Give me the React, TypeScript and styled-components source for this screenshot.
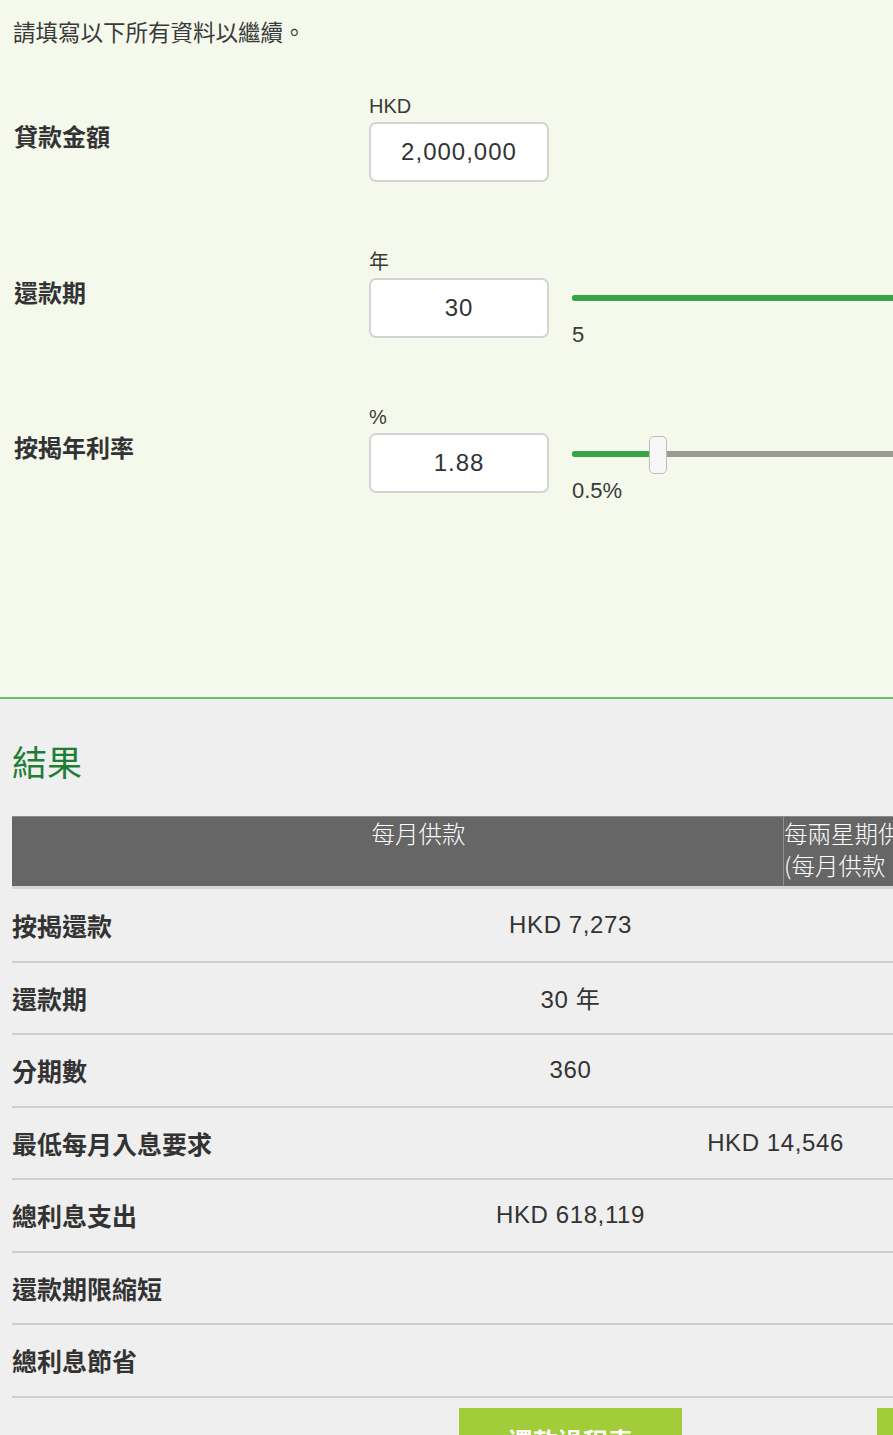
import React from "react";
import styled, { createGlobalStyle } from "styled-components";

const Global = createGlobalStyle`
  html, body {
    margin: 0;
    padding: 0;
    overflow: hidden;
    background: #efefef;
  }
  body {
    font-family: "Liberation Sans", "Noto Sans CJK TC", sans-serif;
    color: #333;
  }
  * { box-sizing: border-box; }
`;

const Page = styled.div`
  width: 100vw;
  overflow: hidden;
`;

const Inner = styled.div`
  width: 1240px;
`;

const FormSection = styled.section`
  background: #f4f9ec;
  border-bottom: 2px solid #6cc06c;
  padding: 18px 0 204px 14px;
`;

const Intro = styled.p`
  margin: 0 0 44px -1px;
  font-size: 22.5px;
  line-height: 32px;
  color: #3a3a3a;
`;

const FieldRow = styled.div`
  display: grid;
  grid-template-columns: 355px auto;
  align-items: center;
  margin-bottom: 67.5px;
  &:last-child { margin-bottom: 0; }
`;

const FieldLabel = styled.div`
  font-size: 24px;
  font-weight: 700;
  color: #333;
  line-height: 30px;
`;

const FieldGroup = styled.div`
  display: flex;
  flex-direction: column;
  gap: 4px;
`;

const Unit = styled.div`
  font-size: 20px;
  line-height: 24px;
  color: #3a3a3a;
`;

const InputLine = styled.div`
  display: flex;
  align-items: flex-start;
  gap: 23px;
  height: 60px;
`;

const Input = styled.input`
  width: 180px;
  height: 60px;
  flex: none;
  border: 2px solid #d4d4d4;
  border-radius: 7px;
  background: #fff;
  text-align: center;
  font-family: "Liberation Sans", sans-serif;
  font-size: 24px;
  letter-spacing: 1px;
  color: #333;
  outline: none;
  padding: 0;
`;

const SliderWrap = styled.div<{ $top: number }>`
  width: 560px;
  padding-top: ${(p) => p.$top}px;
`;

const Track = styled.div`
  position: relative;
  height: 6px;
  border-radius: 3px;
  background: #9a9a97;
`;

const Fill = styled.div`
  position: absolute;
  left: 0;
  top: 0;
  bottom: 0;
  border-radius: 3px 0 0 3px;
  background: #37a546;
`;

const Thumb = styled.div`
  position: absolute;
  top: -15px;
  width: 18px;
  height: 38px;
  margin-left: -9px;
  background: #f7f7f7;
  border: 1px solid #bdbdbd;
  border-radius: 5px;
`;

const Ticks = styled.div`
  display: flex;
  justify-content: space-between;
  font-size: 22px;
  line-height: 30px;
  color: #3a3a3a;
  margin-top: 19px;
`;

const ResultSection = styled.section`
  padding: 40px 0 0 12px;
`;

const ResultTitle = styled.h2`
  margin: 0 0 33px;
  font-family: "Noto Sans CJK TC", sans-serif;
  font-weight: 400;
  font-size: 35px;
  line-height: 44px;
  color: #1f7d35;
`;

const Table = styled.div`
  width: 1180px;
`;

const HeaderRow = styled.div`
  display: grid;
  grid-template-columns: 771px 410px;
  height: 70px;
  background: #666;
  border-top: 1px solid #8a8a8a;
  box-shadow: 0 3px 0 #d6d6d6;
  margin-bottom: 4px;
  color: #fff;
  font-family: "Noto Sans CJK TC", sans-serif;
  font-size: 23.5px;
  line-height: 32px;
  font-weight: 300;
`;

const HeaderCell = styled.div<{ $align: "center" | "left"; $pad?: number }>`
  text-align: ${(p) => p.$align};
  padding-left: ${(p) => p.$pad ?? 0}px;
  border-left: ${(p) => (p.$align === "left" ? "1px solid #8f8f8f" : "none")};
  white-space: nowrap;
`;

const Row = styled.div`
  display: grid;
  grid-template-columns: 346px 425px 410px;
  align-items: center;
  height: 72.5px;
  border-bottom: 2px solid #cfcfcf;
`;

const RowLabel = styled.div`
  font-size: 25px;
  font-weight: 700;
  color: #333;
`;

const Value = styled.div<{ $span?: boolean }>`
  grid-column: ${(p) => (p.$span ? "2 / span 2" : "auto")};
  text-align: center;
  font-size: 24px;
  letter-spacing: 0.6px;
  color: #333;
`;

const ButtonRow = styled.div`
  display: grid;
  grid-template-columns: 346px 425px 410px;
  padding-top: 10px;
`;

const ActionButton = styled.button`
  justify-self: center;
  width: 223px;
  height: 60px;
  border: none;
  background: #a2cc39;
  color: #fff;
  font-family: "Noto Sans CJK TC", sans-serif;
  font-weight: 700;
  font-size: 25px;
  padding-top: 6px;
`;

const Slider = ({
  min,
  max,
  value,
  lo,
  hi,
  top,
}: {
  min: number;
  max: number;
  value: number;
  lo: string;
  hi: string;
  top: number;
}) => {
  const pct = ((value - min) / (max - min)) * 100;
  return (
    <SliderWrap $top={top}>
      <Track>
        <Fill style={{ width: `${pct}%` }} />
        <Thumb style={{ left: `${pct}%` }} />
      </Track>
      <Ticks>
        <span>{lo}</span>
        <span>{hi}</span>
      </Ticks>
    </SliderWrap>
  );
};

const rows: { label: string; value?: string; span?: boolean }[] = [
  { label: "按揭還款", value: "HKD 7,273" },
  { label: "還款期", value: "30 年" },
  { label: "分期數", value: "360" },
  { label: "最低每月入息要求", value: "HKD 14,546", span: true },
  { label: "總利息支出", value: "HKD 618,119" },
  { label: "還款期限縮短" },
  { label: "總利息節省" },
];

export default function App() {
  return (
    <Page>
      <Global />
      <Inner>
        <FormSection>
          <Intro>請填寫以下所有資料以繼續。</Intro>
          <FieldRow>
            <FieldLabel>貸款金額</FieldLabel>
            <FieldGroup>
              <Unit>HKD</Unit>
              <InputLine>
                <Input defaultValue="2,000,000" />
              </InputLine>
            </FieldGroup>
          </FieldRow>
          <FieldRow>
            <FieldLabel>還款期</FieldLabel>
            <FieldGroup>
              <Unit>年</Unit>
              <InputLine>
                <Input defaultValue="30" />
                <Slider min={5} max={30} value={30} lo="5" hi="30" top={17} />
              </InputLine>
            </FieldGroup>
          </FieldRow>
          <FieldRow>
            <FieldLabel>按揭年利率</FieldLabel>
            <FieldGroup>
              <Unit>%</Unit>
              <InputLine>
                <Input defaultValue="1.88" />
                <Slider min={0.5} max={9.5} value={1.88} lo="0.5%" hi="9.5%" top={18} />
              </InputLine>
            </FieldGroup>
          </FieldRow>
        </FormSection>
        <ResultSection>
          <ResultTitle>結果</ResultTitle>
          <Table>
            <HeaderRow>
              <HeaderCell $align="center" $pad={42}>每月供款</HeaderCell>
              <HeaderCell $align="left">
                每兩星期供款
                <br />
                (每月供款 ÷ 2)
              </HeaderCell>
            </HeaderRow>
            {rows.map((r) => (
              <Row key={r.label}>
                <RowLabel>{r.label}</RowLabel>
                <Value $span={r.span}>{r.value ?? ""}</Value>
                {!r.span && <Value />}
              </Row>
            ))}
            <ButtonRow>
              <span />
              <ActionButton>還款過程表</ActionButton>
              <ActionButton>還款過程表</ActionButton>
            </ButtonRow>
          </Table>
        </ResultSection>
      </Inner>
    </Page>
  );
}
